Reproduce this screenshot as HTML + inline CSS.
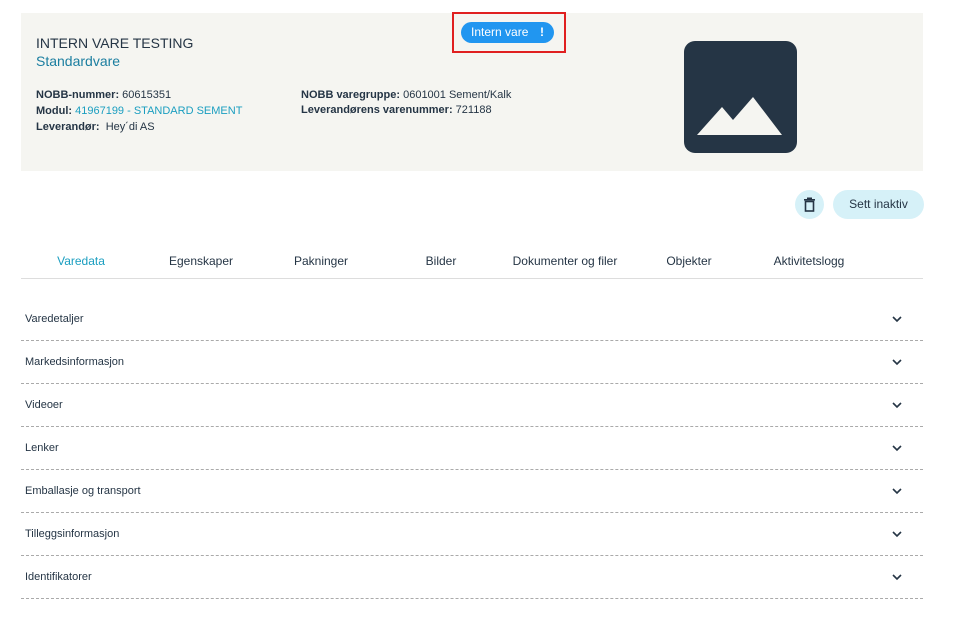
<!DOCTYPE html>
<html><head><style>
body{margin:0;background:#fff;font-family:"Liberation Sans",sans-serif;color:#253545;width:958px;height:617px;position:relative;overflow:hidden}
.a{position:absolute}
.hdr{left:21px;top:13px;width:902px;height:158px;background:#f5f5f1}
.s{font-size:11px;white-space:nowrap}
b{font-weight:bold}
.tab{top:254px;font-size:12px;width:120px;text-align:center}
.row{left:21px;width:902px;height:42px;border-bottom:1px dashed #aaa;font-size:11px}
.row span{position:absolute;left:4px;top:15px}
.row svg{position:absolute;right:21px;top:18px}
</style></head><body>
<div class="a hdr"></div>
<div class="a" style="left:452px;top:12px;width:114px;height:41px;border:2px solid #e02020;box-sizing:border-box"></div>
<div class="a" style="left:461px;top:22px;width:93px;height:21px;border-radius:11px;background:#2196f0;color:#fff;font-size:12px;line-height:21px"><span style="position:absolute;left:10px">Intern vare</span><span style="position:absolute;left:79px;font-weight:bold">!</span></div>
<div class="a" style="left:36px;top:35px;font-size:14px">INTERN VARE TESTING</div>
<div class="a" style="left:36px;top:53px;font-size:14px;color:#1b7ea0">Standardvare</div>
<div class="a s" style="left:36px;top:89px"><b>NOBB-nummer:</b> 60615351</div>
<div class="a s" style="left:36px;top:105px"><b>Modul:</b> <span style="color:#1a9ec0">41967199 - STANDARD SEMENT</span></div>
<div class="a s" style="left:36px;top:121px"><b>Leverandør:</b>&nbsp; Hey´di AS</div>
<div class="a s" style="left:301px;top:89px"><b>NOBB varegruppe:</b> 0601001 Sement/Kalk</div>
<div class="a s" style="left:301px;top:104px"><b>Leverandørens varenummer:</b> 721188</div>
<div class="a" style="left:684px;top:41px;width:113px;height:112px;border-radius:11px;background:#253545"></div>
<svg class="a" style="left:684px;top:41px" width="113" height="112"><polygon points="13,94 38,66 49,79 69,56 98,94" fill="#f5f5f1"/></svg>
<div class="a" style="left:795px;top:190px;width:29px;height:29px;border-radius:50%;background:#d6f1f8"></div>
<svg class="a" style="left:803px;top:197px" width="13" height="15"><rect x="1" y="2" width="11" height="1.6" fill="#253545"/><rect x="4" y="0.5" width="5" height="1.5" fill="#253545"/><rect x="2.5" y="4.5" width="8" height="9.5" fill="none" stroke="#253545" stroke-width="1.6"/></svg>
<div class="a" style="left:833px;top:190px;width:91px;height:29px;border-radius:15px;background:#d6f1f8;font-size:12px;line-height:29px;text-align:center">Sett inaktiv</div>
<div class="a tab" style="left:21px;color:#1a9ec0">Varedata</div>
<div class="a tab" style="left:141px">Egenskaper</div>
<div class="a tab" style="left:261px">Pakninger</div>
<div class="a tab" style="left:381px">Bilder</div>
<div class="a tab" style="left:505px">Dokumenter og filer</div>
<div class="a tab" style="left:629px">Objekter</div>
<div class="a tab" style="left:749px">Aktivitetslogg</div>
<div class="a" style="left:21px;top:278px;width:902px;height:1px;background:#ddd"></div>
<div class="a row" style="top:298px"><span>Varedetaljer</span><svg width="10" height="7"><path d="M1 1l4 4 4-4" fill="none" stroke="#253545" stroke-width="1.6"/></svg></div>
<div class="a row" style="top:341px"><span>Markedsinformasjon</span><svg width="10" height="7"><path d="M1 1l4 4 4-4" fill="none" stroke="#253545" stroke-width="1.6"/></svg></div>
<div class="a row" style="top:384px"><span>Videoer</span><svg width="10" height="7"><path d="M1 1l4 4 4-4" fill="none" stroke="#253545" stroke-width="1.6"/></svg></div>
<div class="a row" style="top:427px"><span>Lenker</span><svg width="10" height="7"><path d="M1 1l4 4 4-4" fill="none" stroke="#253545" stroke-width="1.6"/></svg></div>
<div class="a row" style="top:470px"><span>Emballasje og transport</span><svg width="10" height="7"><path d="M1 1l4 4 4-4" fill="none" stroke="#253545" stroke-width="1.6"/></svg></div>
<div class="a row" style="top:513px"><span>Tilleggsinformasjon</span><svg width="10" height="7"><path d="M1 1l4 4 4-4" fill="none" stroke="#253545" stroke-width="1.6"/></svg></div>
<div class="a row" style="top:556px"><span>Identifikatorer</span><svg width="10" height="7"><path d="M1 1l4 4 4-4" fill="none" stroke="#253545" stroke-width="1.6"/></svg></div>
</body></html>
